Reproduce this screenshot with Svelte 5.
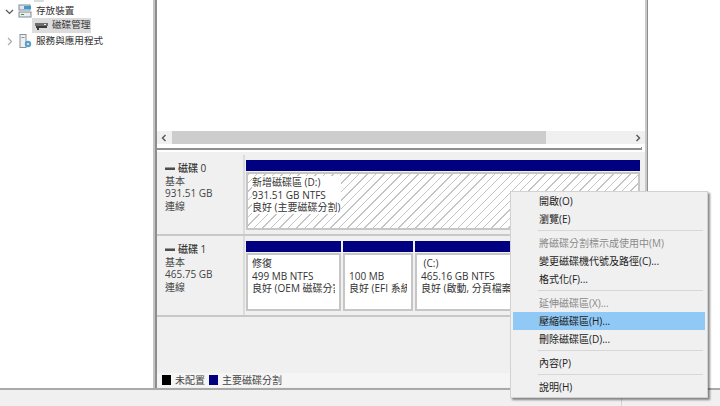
<script lang="ts">
  const parts = [
    { w: 95, name: '修復', size: '499 MB NTFS', status: '良好 (OEM 磁碟分割)' },
    { w: 70, name: '', size: '100 MB', status: '良好 (EFI 系統磁碟分割)' },
    { w: 225, name: '\u00a0(C:)', size: '465.16 GB NTFS', status: '良好 (啟動, 分頁檔案, 損毀傾印)' },
  ];

  const menu = [
    { label: '開啟(O)' },
    { label: '瀏覽(E)' },
    { sep: true },
    { label: '將磁碟分割標示成使用中(M)', off: true },
    { label: '變更磁碟機代號及路徑(C)...' },
    { label: '格式化(F)...' },
    { sep: true },
    { label: '延伸磁碟區(X)...', off: true },
    { label: '壓縮磁碟區(H)...', active: true },
    { label: '刪除磁碟區(D)...' },
    { sep: true },
    { label: '內容(P)' },
    { sep: true },
    { label: '說明(H)' },
  ];
</script>

<div class="window">
  <div class="panes">
    <aside class="tree">
      <div class="stub"></div>
      <div class="node">
        <svg class="chev" width="9" height="9" viewBox="0 0 9 9"><path d="M1 3l3.5 3.5L8 3" fill="none" stroke="#555" stroke-width="1.2" /></svg>
        <svg width="14" height="14" viewBox="0 0 14 14">
          <rect x="1" y="1" width="11" height="5" fill="#dfe7ec" stroke="#7d8a94" />
          <rect x="6" y="2" width="7" height="3" fill="#3a9bd1" />
          <rect x="1" y="8" width="12" height="5" fill="#e8edf0" stroke="#7d8a94" />
          <rect x="3" y="10" width="3" height="1" fill="#4b8f3c" />
        </svg>
        <span>存放裝置</span>
      </div>
      <div class="node child">
        <div class="picked">
          <svg width="13" height="10" viewBox="0 0 13 10">
            <rect x="0" y="2" width="13" height="3" fill="#6e6e6e" />
            <rect x="1" y="5" width="11" height="2" fill="#3c3c3c" />
            <rect x="2" y="7" width="2" height="2" fill="#3c3c3c" />
            <rect x="9" y="3" width="2" height="1" fill="#eee" />
          </svg>
          <span>磁碟管理</span>
        </div>
      </div>
      <div class="node">
        <svg class="chev" width="9" height="9" viewBox="0 0 9 9"><path d="M3 1l3.5 3.5L3 8" fill="none" stroke="#aaa" stroke-width="1.2" /></svg>
        <svg width="14" height="14" viewBox="0 0 14 14">
          <rect x="2" y="0.5" width="6" height="13" fill="#eef1f3" stroke="#87929a" />
          <rect x="3.5" y="3" width="3" height="1" fill="#87929a" />
          <circle cx="10" cy="10" r="3.2" fill="#5a9fc9" />
          <circle cx="10" cy="10" r="1.1" fill="#e6f1f7" />
        </svg>
        <span>服務與應用程式</span>
      </div>
    </aside>

    <main class="center">
      <div class="list">
        <div class="list-body"></div>
        <div class="hscroll">
          <svg class="arrow" width="8" height="8" viewBox="0 0 8 8"><path d="M5.5 1L2.5 4l3 3" fill="none" stroke="#555" stroke-width="1.4" /></svg>
          <div class="thumb"></div>
          <svg class="arrow" width="8" height="8" viewBox="0 0 8 8"><path d="M2.5 1l3 3-3 3" fill="none" stroke="#555" stroke-width="1.4" /></svg>
        </div>
        <div class="rule"></div>
      </div>

      <div class="graph">
        <div class="disk first">
          <div class="disk-label">
            <div class="disk-title"><i class="disk-icon"></i>磁碟 0</div>
            <div>基本</div>
            <div>931.51 GB</div>
            <div>連線</div>
          </div>
          <div class="vols">
            <div class="vol grow">
              <div class="vol-bar"></div>
              <div class="vol-box hatch">
                <div class="vol-text">
                  <div>新增磁碟區 (D:)</div>
                  <div>931.51 GB NTFS</div>
                  <div>良好 (主要磁碟分割)</div>
                </div>
              </div>
            </div>
          </div>
        </div>

        <div class="disk">
          <div class="disk-label">
            <div class="disk-title"><i class="disk-icon"></i>磁碟 1</div>
            <div>基本</div>
            <div>465.75 GB</div>
            <div>連線</div>
          </div>
          <div class="vols">
            {#each parts as p}
              <div class="vol" style="width: {p.w}px">
                <div class="vol-bar"></div>
                <div class="vol-box">
                  <div class="vol-text plain">
                    <div class="line">{p.name}</div>
                    <div class="line">{p.size}</div>
                    <div class="line">{p.status}</div>
                  </div>
                </div>
              </div>
            {/each}
          </div>
        </div>

        <div class="spacer"></div>

        <div class="legend">
          <i class="swatch black"></i><span>未配置</span>
          <i class="swatch navy"></i><span>主要磁碟分割</span>
        </div>
      </div>
    </main>

    <aside class="actions"></aside>
  </div>

  <footer class="status">
    <div class="status-cell"></div>
  </footer>

  <div class="menu">
    {#each menu as m}
      {#if m.sep}
        <div class="sep"></div>
      {:else}
        <div class="item" class:off={m.off} class:active={m.active}>{m.label}</div>
      {/if}
    {/each}
  </div>
</div>

<style>
  :global(body) {
    margin: 0;
    background: #fff;
  }

  .window {
    position: relative;
    width: 720px;
    height: 406px;
    overflow: hidden;
    display: flex;
    flex-direction: column;
    font-family: "Open Sans", "Noto Sans CJK TC", sans-serif;
    font-size: 10px;
    line-height: 12.5px;
    color: #333;
  }

  .panes {
    display: flex;
    height: 388px;
    flex: none;
    border-bottom: 2px solid #a9a9a9;
  }

  .tree {
    width: 153px;
    flex: none;
    background: #fff;
    border-right: 2px solid #c4c4c4;
    position: relative;
    padding-top: 4px;
    font-size: 9.6px;
  }

  .stub {
    position: absolute;
    left: 34px;
    top: 0;
    width: 10px;
    height: 2px;
    background: #d8dde0;
  }

  .node {
    display: flex;
    align-items: center;
    height: 14px;
    gap: 4px;
    padding-left: 5px;
    white-space: nowrap;
  }

  .node.child {
    padding-left: 32px;
    height: 15px;
  }

  .node:last-child { margin-top: 1px; }

  .picked {
    display: flex;
    align-items: center;
    gap: 4px;
    width: 59px;
    height: 15px;
    padding-left: 3px;
    box-sizing: border-box;
    background: #dcdcdc;
  }

  .center {
    width: 488px;
    flex: none;
    border-left: 2px solid #8e8e8e;
    border-right: 2px solid #c9c9c9;
    display: flex;
    flex-direction: column;
  }

  .list {
    height: 152px;
    flex: none;
    display: flex;
    flex-direction: column;
    background: #fff;
  }

  .list-body {
    height: 131px;
    flex: none;
  }

  .hscroll {
    height: 13px;
    flex: none;
    background: #f0f0f0;
    display: flex;
    align-items: center;
    padding: 0 3px;
  }

  .thumb {
    width: 374px;
    height: 13px;
    margin-left: 4px;
    margin-right: auto;
    background: #cdcdcd;
  }

  .arrow { flex: none; }

  /* closes the list, with the little tick up at its right end */
  .rule {
    height: 3px;
    margin: 3px 3px 0 0;
    box-sizing: border-box;
    border-bottom: 2px solid #8f8f8f;
    border-right: 1px solid #8f8f8f;
  }

  .graph {
    flex: 1;
    background: #f0f0f0;
    display: flex;
    flex-direction: column;
    padding-top: 3px;
    min-height: 0;
  }

  .disk {
    display: flex;
    height: 81px;
    flex: none;
    border-bottom: 2px solid #c8c8c8;
    box-sizing: border-box;
  }

  .disk-label {
    width: 87px;
    flex: none;
    margin-left: 1px;
    padding: 7px 0 0 7px;
    box-sizing: border-box;
    background: #f0f0f0;
    border-right: 2px solid #dcdcdc;
    color: #444;
  }

  .disk-title {
    display: flex;
    align-items: center;
    font-weight: 500;
    color: #333;
    height: 12.5px;
  }

  .disk-icon {
    display: inline-block;
    width: 10px;
    height: 3px;
    margin-right: 3px;
    background: linear-gradient(#9a9a9a 0 1px, #4d4d4d 1px);
  }

  .vols {
    display: flex;
    gap: 2px;
    padding: 5px 0 0 1px;
    width: 394px;
  }

  .vol {
    display: flex;
    flex-direction: column;
    flex: none;
    min-width: 0;
  }

  .vol.grow { flex: 1; }

  .vol-bar {
    height: 11px;
    background: #000080;
    flex: none;
  }

  .vol-box {
    height: 58px;
    margin-top: 1px;
    border: 2px solid #c6c6c6;
    box-sizing: border-box;
    background: #fff;
    padding: 2px 4px;
    overflow: hidden;
  }

  .hatch {
    background: repeating-linear-gradient(135deg, #c4c4c4 0 1px, #fff 1px 6px);
  }

  .vol-text {
    width: fit-content;
    background: #fff;
  }

  .vol-text.plain {
    width: auto;
    background: none;
  }

  .line {
    height: 12.5px;
    white-space: nowrap;
    overflow: hidden;
  }

  .spacer { flex: 1; }

  .legend {
    display: flex;
    align-items: center;
    height: 14px;
    flex: none;
    margin-bottom: 1px;
    padding-left: 5px;
    background: #f5f5f5;
    color: #444;
  }

  .swatch {
    display: block;
    width: 9px;
    height: 10px;
    margin-right: 4px;
  }

  .swatch.black { background: #000; }
  .swatch.navy { background: #000080; margin-left: 4px; }

  .actions {
    flex: 1;
    background: #fff;
    border-left: 1px solid #8e8e8e;
  }

  .status {
    flex: 1;
    background: #f0f0f0;
    display: flex;
    justify-content: flex-end;
  }

  .status-cell {
    width: 98px;
    border-left: 1px solid #d4d4d4;
  }

  .menu {
    position: absolute;
    left: 510px;
    top: 191px;
    width: 198px;
    height: 207px;
    box-sizing: border-box;
    padding: 0 2px;
    background: #f0f0f0;
    border: 1px solid #d2d2d2;
    box-shadow: 2px 2px 2px rgba(0, 0, 0, 0.45);
    color: #222;
  }

  .item {
    height: 18px;
    line-height: 18px;
    padding-left: 26px;
  }

  .item.off { color: #8a8a8a; }
  .item.active { background: #90c8f6; }

  .sep {
    height: 1px;
    margin: 2px 2px 3px 25px;
    background: #d7d7d7;
  }
</style>
